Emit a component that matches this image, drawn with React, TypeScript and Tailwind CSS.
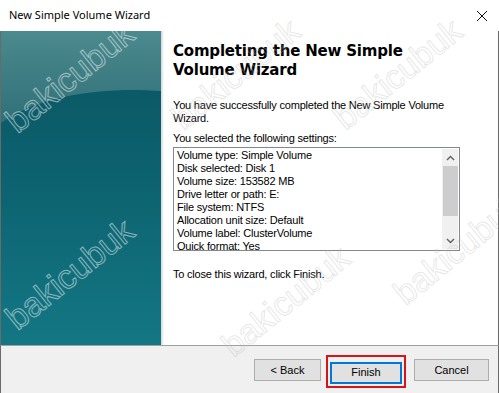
import React from "react";

const settings = [
  "Volume type: Simple Volume",
  "Disk selected: Disk 1",
  "Volume size: 153582 MB",
  "Drive letter or path: E:",
  "File system: NTFS",
  "Allocation unit size: Default",
  "Volume label: ClusterVolume",
  "Quick format: Yes",
];

// watermark anchors: left edge / vertical middle of the word before rotating
const marks = [
  { left: 10, top: 108, color: "rgba(255,255,255,0.5)" },
  { left: 10, top: 305, color: "rgba(255,255,255,0.5)" },
  { left: 176, top: 105, color: "rgba(185,185,185,0.35)" },
  { left: 338, top: 105, color: "rgba(185,185,185,0.35)" },
  { left: 226, top: 332, color: "rgba(185,185,185,0.35)" },
  { left: 398, top: 280, color: "rgba(185,185,185,0.35)" },
];

const Watermark = ({ left, top, color }: { left: number; top: number; color: string }) => (
  <span
    className="absolute pointer-events-none select-none text-[34px] leading-none text-transparent origin-left -rotate-[39deg] font-['Liberation_Sans',sans-serif]"
    style={{ left, top, WebkitTextStroke: `1px ${color}` }}
  >
    bakicubuk
  </span>
);

const SidePanel = () => (
  <div className="w-[163px] h-full shrink-0 flex">
    <svg width="160" height="314" viewBox="0 0 160 314" className="block">
      <defs>
        <linearGradient id="base" x1="0" y1="0" x2="0" y2="1">
          <stop offset="0" stopColor="#0a5462" />
          <stop offset="0.5" stopColor="#0d6370" />
          <stop offset="1" stopColor="#147784" />
        </linearGradient>
        <linearGradient id="glow" x1="0" y1="0" x2="0" y2="1">
          <stop offset="0" stopColor="#4b8a8e" />
          <stop offset="1" stopColor="#2f7077" />
        </linearGradient>
      </defs>
      <rect width="160" height="314" fill="url(#base)" />
      <path d="M0 0 H160 V60 C110 56 40 62 0 92 Z" fill="url(#glow)" />
    </svg>
    <div className="w-[3px] h-full bg-gradient-to-r from-[#cfd6d8] to-white" />
  </div>
);

export default function App() {
  return (
    <div className="relative w-[499px] h-[393px] overflow-hidden bg-white font-['Liberation_Sans',sans-serif] text-black">
      <div className="h-[31px] flex items-center justify-between pl-[9px] pr-[11px] bg-white">
        <span className="text-[11px] font-['Noto_Sans',sans-serif] text-black">New Simple Volume Wizard</span>
        <svg width="12" height="12" viewBox="0 0 12 12">
          <path d="M1 1 L11 11 M11 1 L1 11" stroke="#111" strokeWidth="1" />
        </svg>
      </div>

      <div className="h-[314px] flex border-l border-r border-[#6a6a6a]">
        <SidePanel />
        <div className="flex-1 pl-[9px] pr-[30px] pt-[11px] flex flex-col">
          <h1 className="text-[15px] leading-[19px] font-bold font-['DejaVu_Sans',sans-serif] tracking-[-0.2px] text-black">
            Completing the New Simple
            <br />
            Volume Wizard
          </h1>
          <p className="mt-[19px] text-[11px] leading-[13px] tracking-[-0.2px]">
            You have successfully completed the New Simple Volume
            <br />
            Wizard.
          </p>
          <p className="mt-[7px] text-[11px] leading-[13px] tracking-[-0.2px]">You selected the following settings:</p>
          <div className="mt-[2px] w-[287px] h-[104px] border border-[#828790] flex bg-white">
            <div className="flex-1 overflow-hidden pl-[3px] pt-[1px]">
              {settings.map((s) => (
                <div key={s} className="text-[11px] leading-[13px] tracking-[-0.2px] whitespace-nowrap">
                  {s}
                </div>
              ))}
            </div>
            <div className="w-[16px] my-[1px] mr-[1px] bg-[#f0f0f0] flex flex-col items-center">
              <div className="h-[17px] flex items-center justify-center">
                <svg width="9" height="6" viewBox="0 0 9 6">
                  <path d="M1 5 L4.5 1.5 L8 5" stroke="#606060" strokeWidth="1.4" fill="none" />
                </svg>
              </div>
              <div className="w-[15px] h-[50px] bg-[#cdcdcd]" />
              <div className="flex-1" />
              <div className="h-[17px] flex items-center justify-center">
                <svg width="9" height="6" viewBox="0 0 9 6">
                  <path d="M1 1 L4.5 4.5 L8 1" stroke="#606060" strokeWidth="1.4" fill="none" />
                </svg>
              </div>
            </div>
          </div>
          <p className="mt-[17px] text-[11px] leading-[13px] tracking-[-0.2px]">To close this wizard, click Finish.</p>
        </div>
      </div>

      <div className="h-[48px] bg-[#f0f0f0] border-t border-[#a0a0a0] border-l border-r border-l-[#6a6a6a] border-r-[#6a6a6a] flex items-start pt-[13px] pl-[253px]">
        <button className="w-[67px] h-[22px] bg-[#e1e1e1] border border-[#adadad] text-[11px] leading-none">
          &lt; Back
        </button>
        <div className="ml-[5px] -mt-[4px] p-[2px] border-2 border-[#d7141a]">
          <button className="w-[72px] h-[22px] bg-[#e1e1e1] border-2 border-[#0078d7] text-[11px] leading-none">
            Finish
          </button>
        </div>
        <button className="ml-[8px] w-[75px] h-[22px] bg-[#e1e1e1] border border-[#adadad] text-[11px] leading-none">
          Cancel
        </button>
      </div>

      {marks.map((m, i) => (
        <Watermark key={i} {...m} />
      ))}
    </div>
  );
}
